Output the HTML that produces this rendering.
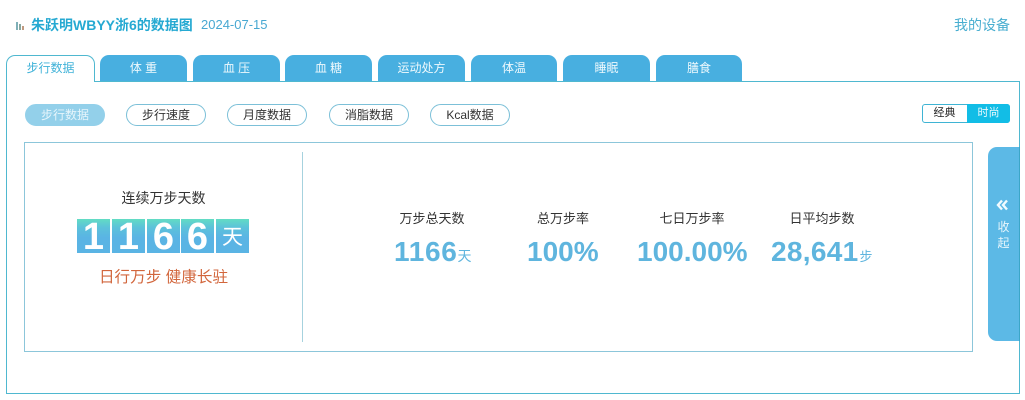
<!DOCTYPE html>
<html lang="zh"><head><meta charset="utf-8"><style>
*{box-sizing:border-box;margin:0;padding:0}
html,body{width:1025px;height:400px;background:#fff;overflow:hidden}
body{position:relative;font-family:"Liberation Sans","Noto Sans CJK SC",sans-serif;color:#333}
.a{position:absolute;white-space:nowrap}
.c{text-align:center}
.tab{position:absolute;top:55px;height:26px;background:#48afe0;border-radius:9px 9px 0 0;color:#eef9fd;font-size:12px;line-height:26px;text-align:center}
.pill{position:absolute;top:104px;width:80px;height:22px;border:1px solid #7cc0d8;border-radius:11px;font-size:12px;line-height:20px;text-align:center;color:#333;background:#fff}
.lab{position:absolute;top:210px;font-size:13px;line-height:17px;text-align:center;color:#333;white-space:nowrap}
.num{position:absolute;top:235px;font-size:28px;line-height:34px;font-weight:700;color:#5fb5de;white-space:nowrap;text-align:center}
.num small{font-size:14px;font-weight:400;letter-spacing:0}
.d{position:absolute;top:219px;width:33px;height:34px;background:linear-gradient(#62dcc4 0,#5cc2da 25%,#5ab4e4 55%);color:#fff;font-size:38px;font-weight:700;line-height:37px;text-align:center}
</style></head><body>
<svg class="a" style="left:16px;top:21px" width="8" height="9" viewBox="0 0 8 9"><rect x="0" y="1" width="2" height="8" fill="#7fb0b8"/><rect x="3" y="3" width="2" height="6" fill="#88a8a0"/><rect x="6" y="5" width="2" height="4" fill="#c09a80"/></svg>
<div class="a" style="left:31px;top:16px;font-size:14px;line-height:18px;font-weight:700;color:#25a9d2">朱跃明WBYY浙6的数据图</div>
<div class="a" style="left:201px;top:17px;font-size:13px;line-height:16px;color:#48a8d2">2024-07-15</div>
<div class="a" style="left:954px;top:16px;font-size:14px;line-height:18px;color:#48aed0">我的设备</div>

<div class="a" style="left:6px;top:81px;width:1014px;height:313px;border:1px solid #4fb8d0"></div>
<div class="a c" style="left:6px;top:55px;width:89px;height:27px;background:#fff;border:1px solid #4fb8d0;border-bottom:0;border-radius:9px 9px 0 0;font-size:12px;line-height:25px;color:#3fb2d8">步行数据</div>
<div class="tab" style="left:100px;width:87px">体 重</div>
<div class="tab" style="left:193px;width:87px">血 压</div>
<div class="tab" style="left:285px;width:87px">血 糖</div>
<div class="tab" style="left:378px;width:87px">运动处方</div>
<div class="tab" style="left:471px;width:86px">体温</div>
<div class="tab" style="left:563px;width:87px">睡眠</div>
<div class="tab" style="left:656px;width:86px">膳食</div>

<div class="pill" style="left:25px;background:#93d0ea;border-color:#93d0ea;color:#e6f5fb">步行数据</div>
<div class="pill" style="left:126px">步行速度</div>
<div class="pill" style="left:227px">月度数据</div>
<div class="pill" style="left:329px">消脂数据</div>
<div class="pill" style="left:430px">Kcal数据</div>

<div class="a" style="left:922px;top:104px;width:88px;height:19px;border:1px solid #3fb4d4;border-radius:3px;background:#fff"></div>
<div class="a c" style="left:923px;top:105px;width:43px;height:17px;font-size:11px;line-height:17px;color:#222">经典</div>
<div class="a c" style="left:967px;top:104px;width:43px;height:19px;font-size:11px;line-height:19px;color:#e8f8fc;background:#12bde6;border-radius:0 3px 3px 0">时尚</div>

<div class="a" style="left:24px;top:142px;width:949px;height:210px;border:1px solid #8cc6da"></div>
<div class="a" style="left:302px;top:152px;width:1px;height:190px;background:#a6d2de"></div>

<div class="a c" style="left:77px;top:189px;width:173px;font-size:14px;line-height:18px;color:#333">连续万步天数</div>
<div class="d" style="left:77px">1</div>
<div class="d" style="left:112px">1</div>
<div class="d" style="left:147px">6</div>
<div class="d" style="left:181px">6</div>
<div class="d" style="left:216px;font-size:21px;font-weight:400">天</div>
<div class="a c" style="left:77px;top:268px;width:173px;font-size:15.6px;line-height:20px;color:#d2663c">日行万步 健康长驻</div>

<div class="lab" style="left:392px;width:80px">万步总天数</div>
<div class="lab" style="left:523px;width:80px">总万步率</div>
<div class="lab" style="left:652px;width:80px">七日万步率</div>
<div class="lab" style="left:782px;width:80px">日平均步数</div>
<div class="num" style="left:394px;letter-spacing:.7px">1166<small>天</small></div>
<div class="num" style="left:527px">100%</div>
<div class="num" style="left:637px">100.00%</div>
<div class="num" style="left:771px;letter-spacing:.3px">28,641<small style="font-size:13px;margin-left:1px">步</small></div>

<div class="a" style="left:988px;top:147px;width:31px;height:194px;background:#5cb9e6;border-radius:9px 0 0 9px"></div>
<div class="a" style="left:1019px;top:147px;width:1px;height:194px;background:#3ba6c8"></div>
<svg class="a" style="left:996px;top:199px" width="12" height="12" viewBox="0 0 12 12"><path d="M6 1.5L2 6L6 10.5M11 1.5L7 6L11 10.5" fill="none" stroke="#f2fbff" stroke-width="2.4"/></svg>
<div class="a c" style="left:988px;top:219px;width:31px;font-size:12px;line-height:16px;color:#e8f6fc">收<br>起</div>
</body></html>
